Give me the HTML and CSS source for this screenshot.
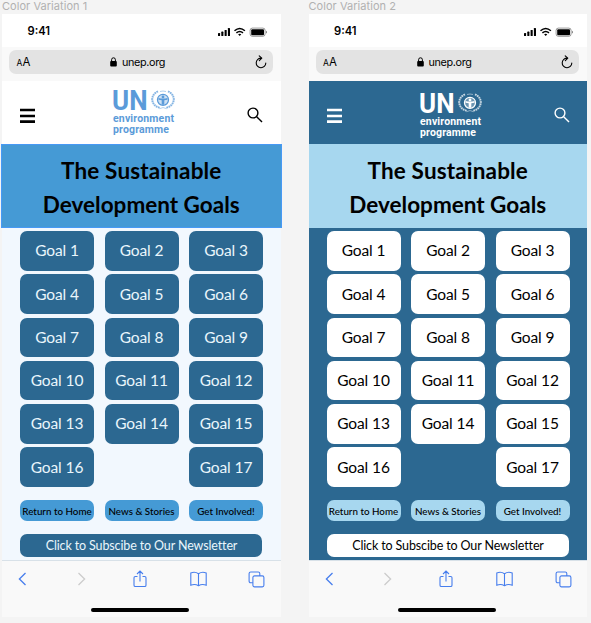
FILE: index.html
```html
<!DOCTYPE html>
<html lang="en">
<head>
<meta charset="utf-8">
<title>Color Variations</title>
<link rel="stylesheet" href="styles.css">
</head>
<body>
<svg class="defs" aria-hidden="true">
  <symbol id="status" viewBox="0 0 50 10">
    <g fill="currentColor">
      <rect x="0" y="6" width="2.1" height="3" rx=".6"/><rect x="3.3" y="4.6" width="2.1" height="4.4" rx=".6"/><rect x="6.6" y="2.9" width="2.1" height="6.1" rx=".6"/><rect x="9.9" y="1" width="2.1" height="8" rx=".6"/>
      <rect x="33.2" y="2.2" width="12.8" height="6" rx="1"/>
      <path d="M48 3.8v2.8q1-.4 1-1.4t-1-1.4z" opacity=".5"/>
      <path d="M20.1 7.3q1.6-1.3 3.2 0l-1.6 1.7z"/>
    </g>
    <rect x="32.1" y="1.1" width="15" height="8.2" rx="2.3" fill="none" stroke="currentColor" stroke-width=".8" opacity=".5"/>
    <path d="M16.5 3.8q5.2-4.6 10.4 0M18.4 5.9q3.3-2.8 6.6 0" fill="none" stroke="currentColor" stroke-width="1.5"/>
  </symbol>
  <symbol id="lock" viewBox="0 0 7 10"><rect x=".2" y="4" width="6.6" height="5.4" rx="1" fill="currentColor"/><path d="M1.6 4.5V2.7a1.9 1.9 0 0 1 3.8 0v1.8" fill="none" stroke="currentColor" stroke-width="1"/></symbol>
  <symbol id="reload" viewBox="0 0 12 14"><path d="M6.3 3.1A4.8 4.8 0 1 0 10.8 8M4.2.8l2.6 2.4-2.5 2.5" fill="none" stroke="currentColor" stroke-width="1.1" stroke-linecap="round" stroke-linejoin="round"/></symbol>
  <symbol id="menu" viewBox="0 0 15 16"><path d="M0 2h15M0 8h15M0 13.7h15" stroke="currentColor" stroke-width="2.7"/></symbol>
  <symbol id="search" viewBox="0 0 16 16"><g fill="none" stroke="currentColor" stroke-width="1.4"><circle cx="6" cy="6" r="4.9"/><path d="M9.7 9.7l5.3 5.3"/></g></symbol>
  <symbol id="emblem" viewBox="0 0 24 20">
    <circle cx="12" cy="9.8" r="5.500" fill="none" stroke="currentColor" stroke-width="1.300"/>
    <circle cx="12" cy="9.800" r="5" fill="currentColor" opacity=".3"/>
    <g fill="currentColor"><circle cx="12" cy="6.900" r="1.400"/><path d="M7.500 7.900q4.500 1.200 9 0v1.900l-3.200.5v4.500h-2.600v-4.500l-3.200-.5z"/></g>
    <g fill="none" stroke="currentColor" stroke-width="2" stroke-dasharray="1.7 .6" opacity=".75"><path d="M7 1.400C-1 4.700-1 15 9 18M17 1.400C25 4.700 25 15 15 18"/></g>
    <path d="M8.500 18.700q3.500-2.300 7 0M9 1.500q3-1 6 0" fill="none" stroke="currentColor" stroke-width=".8" opacity=".6"/>
  </symbol>
  <symbol id="back" viewBox="0 0 9 14"><path d="M7.500 1L1.400 7l6.100 6" fill="none" stroke="currentColor" stroke-width="1.300"/></symbol>
  <symbol id="share" viewBox="0 0 14 18"><path d="M4.500 6.500H2.300Q1 6.500 1 7.800v7.400q0 1.300 1.300 1.300h9.400q1.300 0 1.300-1.300V7.800q0-1.300-1.300-1.300H9.500M7 11.500V1M4 4l3-3 3 3" fill="none" stroke="currentColor" stroke-width="1.100"/></symbol>
  <symbol id="book" viewBox="0 0 17 16"><path d="M8.500 2.700Q5 .2.800 1.900v12.300q4.200-1.500 7.700.5 3.500-2 7.700-.5V1.900Q12 .2 8.500 2.700zv12" fill="none" stroke="currentColor" stroke-width="1.100"/></symbol>
  <symbol id="tabs" viewBox="0 0 17 17"><g fill="none" stroke="currentColor" stroke-width="1.100"><rect x="4.900" y="4.900" width="11" height="11" rx="1.600"/><path d="M4.900 11.800H2.800Q1.100 11.800 1.100 10V2.600Q1.100 1 2.800 1h7.400q1.600 0 1.600 1.600v2.300"/></g></symbol>
</svg>

<section class="variation light">
  <h2 class="label">Color Variation 1</h2>
  <div class="phone">
    <div class="status"><span>9:41</span><svg><use href="#status"/></svg></div>
    <div class="browser"><div class="address"><span class="aa"><small>A</small>A</span><span class="site"><svg><use href="#lock"/></svg>unep.org</span><svg class="reload"><use href="#reload"/></svg></div></div>
    <header class="header">
      <svg class="menu"><use href="#menu"/></svg>
      <svg class="logo" viewBox="0 0 64 46"><text class="un" x="-1" y="19.700" textLength="35.500" lengthAdjust="spacingAndGlyphs">UN</text><use href="#emblem" x="38" y="0" width="24" height="20"/><text x="0" y="32" textLength="61">environment</text><text x="0" y="42.500" textLength="56">programme</text></svg>
      <svg class="search"><use href="#search"/></svg>
    </header>
    <h1 class="title"><span>The Sustainable</span><br>Development Goals</h1>
    <main class="content">
      <div class="goals"><a>Goal 1</a><a>Goal 2</a><a>Goal 3</a><a>Goal 4</a><a>Goal 5</a><a>Goal 6</a><a>Goal 7</a><a>Goal 8</a><a>Goal 9</a><a>Goal 10</a><a>Goal 11</a><a>Goal 12</a><a>Goal 13</a><a>Goal 14</a><a>Goal 15</a><a>Goal 16</a><a class="last">Goal 17</a></div>
      <div class="links"><a>Return to Home</a><a>News &amp; Stories</a><a>Get Involved!</a></div>
      <a class="newsletter">Click to Subscibe to Our Newsletter</a>
    </main>
    <footer class="toolbar">
      <nav><svg class="back"><use href="#back"/></svg><svg class="back forward"><use href="#back"/></svg><svg class="share"><use href="#share"/></svg><svg class="book"><use href="#book"/></svg><svg class="tabs"><use href="#tabs"/></svg></nav>
      <div class="home"></div>
    </footer>
  </div>
</section>

<section class="variation dark">
  <h2 class="label">Color Variation 2</h2>
  <div class="phone">
    <div class="status"><span>9:41</span><svg><use href="#status"/></svg></div>
    <div class="browser"><div class="address"><span class="aa"><small>A</small>A</span><span class="site"><svg><use href="#lock"/></svg>unep.org</span><svg class="reload"><use href="#reload"/></svg></div></div>
    <header class="header">
      <svg class="menu"><use href="#menu"/></svg>
      <svg class="logo" viewBox="0 0 64 46"><text class="un" x="-1" y="19.700" textLength="35.500" lengthAdjust="spacingAndGlyphs">UN</text><use href="#emblem" x="38" y="0" width="24" height="20"/><text x="0" y="32" textLength="61">environment</text><text x="0" y="42.500" textLength="56">programme</text></svg>
      <svg class="search"><use href="#search"/></svg>
    </header>
    <h1 class="title"><span>The Sustainable</span><br>Development Goals</h1>
    <main class="content">
      <div class="goals"><a>Goal 1</a><a>Goal 2</a><a>Goal 3</a><a>Goal 4</a><a>Goal 5</a><a>Goal 6</a><a>Goal 7</a><a>Goal 8</a><a>Goal 9</a><a>Goal 10</a><a>Goal 11</a><a>Goal 12</a><a>Goal 13</a><a>Goal 14</a><a>Goal 15</a><a>Goal 16</a><a class="last">Goal 17</a></div>
      <div class="links"><a>Return to Home</a><a>News &amp; Stories</a><a>Get Involved!</a></div>
      <a class="newsletter">Click to Subscibe to Our Newsletter</a>
    </main>
    <footer class="toolbar">
      <nav><svg class="back"><use href="#back"/></svg><svg class="back forward"><use href="#back"/></svg><svg class="share"><use href="#share"/></svg><svg class="book"><use href="#book"/></svg><svg class="tabs"><use href="#tabs"/></svg></nav>
      <div class="home"></div>
    </footer>
  </div>
</section>
</body>
</html>
```
FILE: styles.css
```css
* { box-sizing: border-box; }
body {
  margin: 0;
  height: 623px;
  display: flex;
  gap: 28px;
  padding-left: 2px;
  overflow: hidden;
  background: #f4f4f4;
  color: #000;
  font-family: Inter, "Liberation Sans", sans-serif;
}
.defs { position: absolute; width: 0; height: 0; }
.variation { width: 278.5px; flex: none; }
.light {
  --head: #fff; --head-icon: #000; --logo: #5b9bd9; --title: #459ad5;
  --page: #f2f8fe; --tile: #2c6891; --tile-text: #eaf6fc; --link: #459ad5; --logo-top: 9px;
}
.dark {
  --head: #2c6891; --head-icon: #fff; --logo: #fff; --title: #a7d7ef;
  --page: #2c6891; --tile: #fff; --tile-text: #000; --link: #a7d7ef; --logo-top: 11.5px;
}
.label {
  margin: 0;
  height: 14px;
  font-size: 11px;
  line-height: 13px;
  font-weight: 400;
  letter-spacing: .05px;
  color: #b1b1b1;
  white-space: nowrap;
}
.phone { height: 603px; display: flex; flex-direction: column; }
.status {
  height: 33px;
  flex: none;
  display: flex;
  justify-content: space-between;
  padding: 11px 13px 0 25.5px;
  background: #fff;
  font-size: 11.2px;
  line-height: 13px;
  font-weight: 600;
}
.status svg { width: 50px; height: 10px; margin-top: 1.5px; }
.browser { height: 34px; flex: none; padding: 2.5px 8px 0 7px; background: #f9f9f9; }
.address {
  height: 24.5px;
  display: flex;
  align-items: center;
  justify-content: space-between;
  padding: 0 6px 0 7.5px;
  border-radius: 7px;
  background: #e3e3e3;
  font-size: 10.8px;
}
.aa { width: 20px; font-size: 11.5px; line-height: 14px; padding-top: 2px; }
.aa small { font-size: 8.5px; }
.site { display: flex; align-items: center; gap: 5px; margin-top: 1px; margin-left: -16px; letter-spacing: -.35px; }
.site svg { width: 7px; height: 10px; margin-top: -1px; }
.reload { width: 12px; height: 14px; }
.header {
  height: 62.5px;
  flex: none;
  display: flex;
  align-items: flex-start;
  background: var(--head);
  color: var(--head-icon);
}
.menu { width: 15px; height: 16px; margin: 26.5px 0 0 18px; }
.logo { width: 64px; height: 46px; margin: var(--logo-top) 0 0 78px; overflow: visible; color: var(--logo); }
.logo text { font: 700 10.5px Roboto, sans-serif; fill: currentColor; }
.logo .un { font-size: 27px; }
.search { width: 16px; height: 16px; margin: 26px 0 0 70px; }
.title {
  height: 84px;
  flex: none;
  margin: 0;
  padding-top: 10px;
  background: var(--title);
  font: 700 22.5px/34px Lato, sans-serif;
  text-align: center;
}
.title span { letter-spacing: .15px; }
.light .title { margin: 0 -1px; outline: 1px solid #4799f5; outline-offset: -1px; }
.content {
  flex: 1;
  padding: 3.5px 17.5px 0 18px;
  background: var(--page);
  font-family: Lato, sans-serif;
}
.goals, .links { display: grid; grid-template-columns: repeat(3, 74px); column-gap: 10.5px; }
.goals { grid-auto-rows: 39.5px; row-gap: 3.8px; }
.goals a, .links a, .newsletter { display: flex; align-items: center; justify-content: center; white-space: nowrap; }
.goals a {
  padding-bottom: 1px;
  border-radius: 7px;
  background: var(--tile);
  color: var(--tile-text);
  font-size: 15.5px;
  letter-spacing: -.1px;
}
.goals .last { grid-column: 3; }
.links { margin-top: 13.5px; grid-auto-rows: 20.5px; }
.links a { border-radius: 7px; background: var(--link); font-size: 9.8px; font-weight: 500; }
.newsletter {
  width: 242px;
  height: 22.5px;
  margin-top: 13.5px;
  padding-left: 1px;
  border-radius: 7px;
  background: var(--tile);
  color: var(--tile-text);
  font-size: 12.5px;
  letter-spacing: -.13px;
}
.toolbar { height: 57.5px; flex: none; background: #f9f9f9; border-top: 1px solid #d8e1e8; color: #477eed; }
.toolbar nav {
  width: 292.5px;
  height: 36px;
  margin-left: -8.5px;
  display: grid;
  grid-template-columns: repeat(5, 1fr);
  align-items: center;
  justify-items: center;
  padding-top: 1px;
}
.back { width: 9px; height: 14px; }
.forward { transform: scaleX(-1); color: #ccc; }
.share { width: 14px; height: 18px; }
.book { width: 17px; height: 16px; }
.tabs { width: 17px; height: 17px; }
.home { width: 98px; height: 3.5px; margin: 11.5px 0 0 89px; border-radius: 2px; background: #000; }
```
